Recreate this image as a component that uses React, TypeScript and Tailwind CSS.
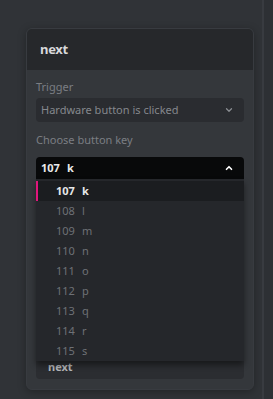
import { ChevronDown, ChevronUp } from 'lucide-react';

const KEYS = [
  { code: 107, key: 'k' },
  { code: 108, key: 'l' },
  { code: 109, key: 'm' },
  { code: 110, key: 'n' },
  { code: 111, key: 'o' },
  { code: 112, key: 'p' },
  { code: 113, key: 'q' },
  { code: 114, key: 'r' },
  { code: 115, key: 's' },
];

const SELECTED = 107;

function Label({ children, className = '' }: { children?: React.ReactNode; className?: string }) {
  return <div className={`h-[14px] text-[11px] leading-[14px] text-[#7b7e83] ${className}`}>{children}</div>;
}

export default function App() {
  return (
    <div
      className="w-[273px] h-[399px] flex bg-[#303337] overflow-hidden"
      style={{ fontFamily: '"Noto Sans", "Open Sans", sans-serif' }}
    >
      {/* main canvas */}
      <div className="w-[262px] shrink-0 pl-[26px] pr-[8px] pt-[28px]">
        <div className="w-[228px] rounded-md overflow-hidden border border-[#383b40] bg-[#34373b] shadow-[0_2px_8px_rgba(0,0,0,0.3)]">
          {/* header */}
          <div className="h-[41px] bg-[#26282b] flex items-center px-[13px]">
            <span className="text-[13px] font-bold text-[#d8d9db] tracking-tight">next</span>
          </div>

          {/* body */}
          <div className="px-[9px] pt-[10px] pb-[10px]">
            <Label>Trigger</Label>
            <div className="mt-[4px] h-[24px] rounded-[4px] bg-[#2a2c30] flex items-center pl-[5px] pr-[10px]">
              <span className="flex-1 text-[11px] text-[#85888d]">Hardware button is clicked</span>
              <ChevronDown className="w-[10px] h-[10px] text-[#8a8d92]" strokeWidth={3} />
            </div>

            <Label className="mt-[11px]">Choose button key</Label>

            {/* open select */}
            <div className="relative mt-[10px]">
              <div className="h-[22px] rounded-t-[4px] bg-[#08090a] flex items-center pl-[5px] pr-[10px]">
                <span className="flex-1 text-[11px] font-bold text-[#e8e9ea]">
                  107<span className="ml-[7px]">k</span>
                </span>
                <ChevronUp className="w-[10px] h-[10px] text-white" strokeWidth={4} />
              </div>

              {/* dropdown list, lies over the fields below */}
              <div className="absolute left-0 right-0 top-full z-10 bg-[#25272b] pt-[2px] shadow-[0_4px_6px_rgba(0,0,0,0.45)]">
                {KEYS.map((k) => {
                  const sel = k.code === SELECTED;
                  return (
                    <div
                      key={k.code}
                      className={`relative h-[20px] flex items-center pl-[20px] text-[11px] ${
                        sel ? 'bg-[#1b1d20] font-bold text-[#e6e7e8]' : 'text-[#6e7176]'
                      }`}
                    >
                      {sel && <span className="absolute left-0 top-0 bottom-0 w-[2px] bg-[#e0167c]" />}
                      <span className="w-[26px]">{k.code}</span>
                      <span>{k.key}</span>
                    </div>
                  );
                })}
              </div>
            </div>

            {/* fields hidden under the open dropdown */}
            <Label className="mt-[12px]" />
            <div className="mt-[6px] h-[24px] rounded-[4px] bg-[#2a2c30]" />
            <Label className="mt-[12px]" />
            <div className="mt-[6px] h-[56px] rounded-[4px] bg-[#2a2c30]" />
            <Label className="mt-[12px]" />
            <div className="mt-[6px] h-[24px] rounded-[4px] bg-[#2b2d31] flex items-center pl-[12px]">
              <span className="text-[11px] font-bold text-[#b4b6b9]">next</span>
            </div>
          </div>
        </div>
      </div>

      {/* right edge strip */}
      <div className="flex-1 border-l-2 border-[#383b40] bg-[#2d3034]" />
    </div>
  );
}
